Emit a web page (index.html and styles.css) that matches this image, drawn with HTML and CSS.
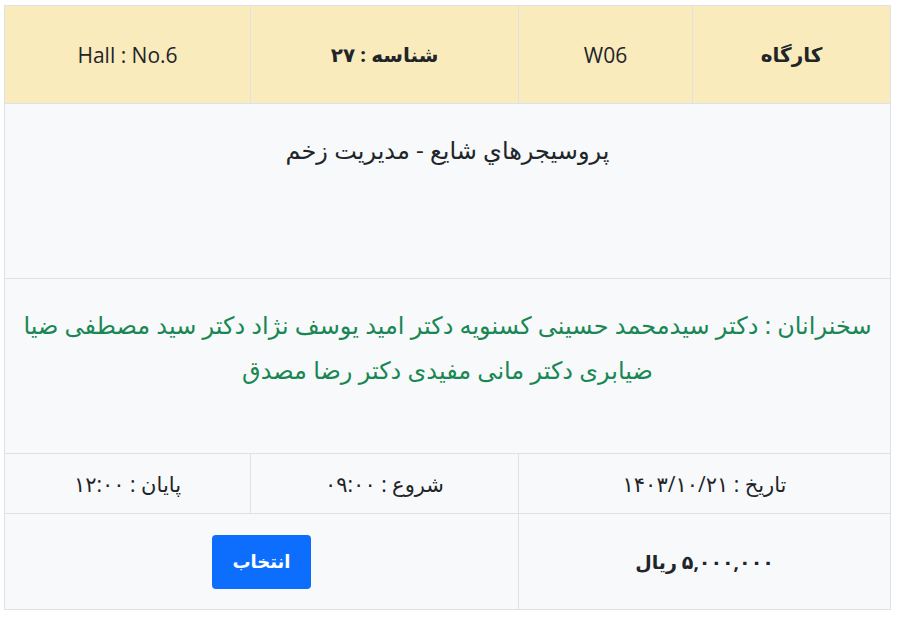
FILE: index.html
```html
<!DOCTYPE html>
<html lang="fa" dir="rtl">
<head>
<meta charset="utf-8">
<link rel="stylesheet" href="styles.css">
</head>
<body>
<div class="wrap">
<table class="session">
  <colgroup>
    <col class="c1"><col class="c2"><col class="c3"><col class="c4">
  </colgroup>
  <tr class="head">
    <td class="b">کارگاه</td>
    <td class="latin">W06</td>
    <td class="b">شناسه : ۲۷</td>
    <td class="latin">Hall : No.6</td>
  </tr>
  <tr class="title">
    <td colspan="4">پروسیجرهاي شایع - مدیریت زخم</td>
  </tr>
  <tr class="speakers">
    <td colspan="4">سخنرانان : دکتر سیدمحمد حسینی کسنویه دکتر امید یوسف نژاد دکتر سید مصطفی ضیا ضیابری دکتر مانی مفیدی دکتر رضا مصدق</td>
  </tr>
  <tr class="times">
    <td colspan="2">تاریخ : ۱۴۰۳/۱۰/۲۱</td>
    <td>شروع : ۰۹:۰۰</td>
    <td>پایان : ۱۲:۰۰</td>
  </tr>
  <tr class="price">
    <td colspan="2" class="b">۵,۰۰۰,۰۰۰ ریال</td>
    <td colspan="2"><button class="btn">انتخاب</button></td>
  </tr>
</table>
</div>
</body>
</html>
```
FILE: styles.css
```css
html, body {
  margin: 0;
  padding: 0;
  background: #ffffff;
}
body {
  font-family: "Open Sans", "DejaVu Sans", sans-serif;
  font-size: 20px;
  color: #212529;
}
.wrap {
  padding: 5px 7px 0 5px;
}
.session {
  width: 886px;
  border-collapse: collapse;
  table-layout: fixed;
  background: #f8f9fa;
}
.c1 { width: 198px; }
.c2 { width: 174px; }
.c3 { width: 268px; }
.c4 { width: 246px; }
.session td {
  border: 1px solid #dee2e6;
  text-align: center;
  vertical-align: middle;
  padding: 0 8px;
}
.b { font-weight: bold; }
.head td {
  background: #faebbc;
  height: 97px;
}
.head .latin {
  font-size: 21px;
}
.title td {
  height: 151px;
  vertical-align: top;
  padding-top: 23px;
  line-height: 45px;
  font-size: 24px;
}
.speakers td {
  height: 151px;
  vertical-align: top;
  padding-top: 23px;
  line-height: 45px;
  font-size: 24px;
  color: #198754;
}
.times td {
  height: 59px;
  font-size: 21px;
}
.price td {
  height: 95px;
  font-size: 19px;
}
.btn {
  font-family: "DejaVu Sans", sans-serif;
  font-size: 18px;
  font-weight: bold;
  color: #ffffff;
  background: #0d6efd;
  border: none;
  border-radius: 4px;
  width: 99px;
  height: 54px;
  padding: 0;
  vertical-align: middle;
}
```
